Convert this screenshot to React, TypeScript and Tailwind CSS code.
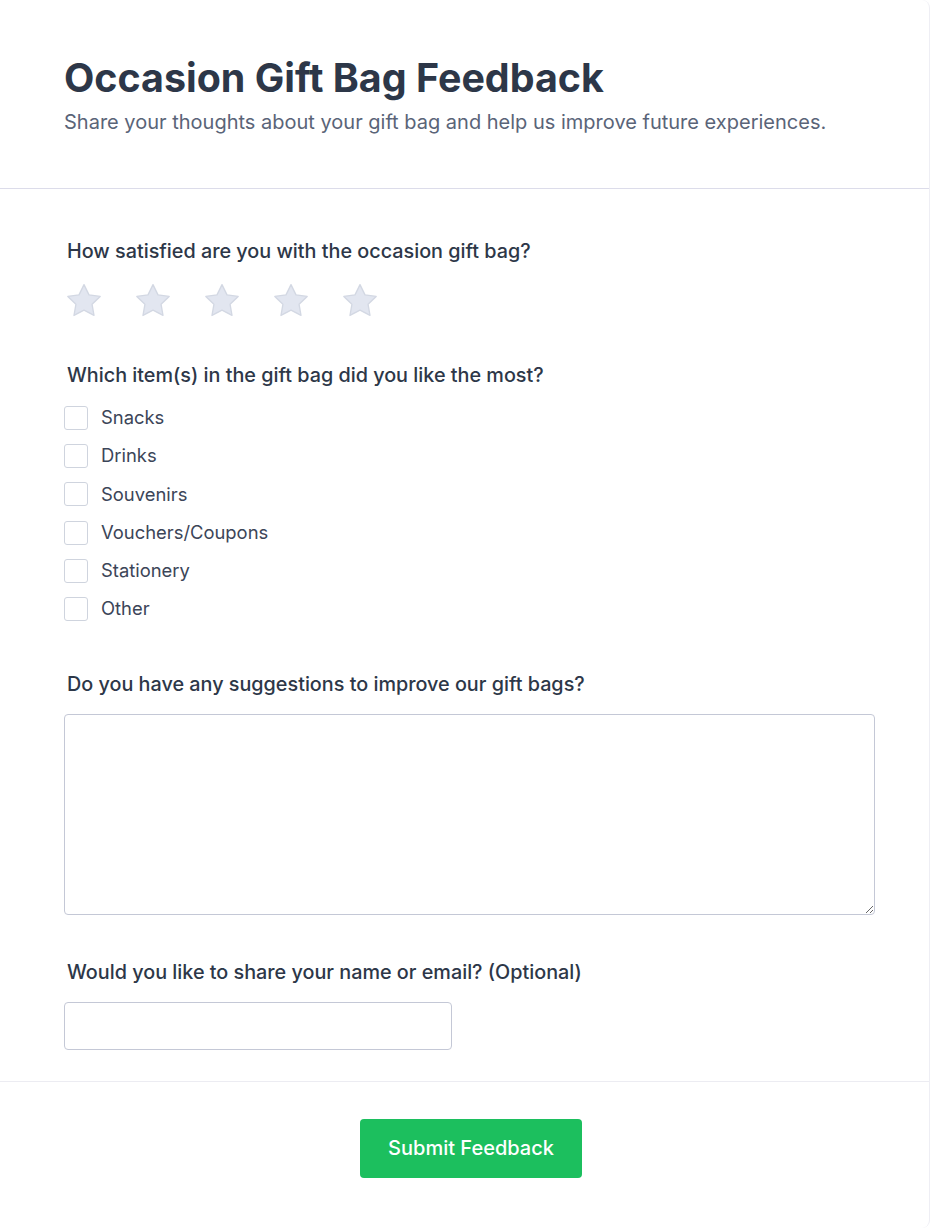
import React, { useState } from "react"

const items = ["Snacks", "Drinks", "Souvenirs", "Vouchers/Coupons", "Stationery", "Other"]

const Star = ({ filled, onClick }: { filled: boolean; onClick: () => void }) => (
  <button type="button" onClick={onClick} className="w-10 h-10 flex items-center justify-center">
    <svg width="40" height="40" viewBox="0 0 24 24">
      <path
        d="M12 2.2l3 6.1 6.7.97-4.85 4.72 1.15 6.67L12 17.5l-6 3.16 1.15-6.67L2.3 9.27l6.7-.97z"
        fill={filled ? "#f6c343" : "#e2e6f0"}
        stroke={filled ? "#e5a812" : "#d3d8e3"}
        strokeWidth="0.8"
        strokeLinejoin="round"
      />
    </svg>
  </button>
)

export default function App() {
  const [rating, setRating] = useState(0)
  const [checked, setChecked] = useState<string[]>([])

  const toggle = (item: string) => {
    setChecked((prev) => (prev.includes(item) ? prev.filter((i) => i !== item) : [...prev, item]))
  }

  return (
    <div className="min-h-screen bg-white font-['Inter',sans-serif]">
      <div className="bg-white rounded-lg border-r border-[#eeeef4]">
        {/* header */}
        <div className="pl-16 pr-[54px] pt-14 pb-[52px] border-b border-[#dcdcea]">
          <h1 className="text-[39.4px] leading-11 font-bold text-[#2d3748]">Occasion Gift Bag Feedback</h1>
          <p className="mt-2 text-xl leading-7 text-[#5a6478]">
            Share your thoughts about your gift bag and help us improve future experiences.
          </p>
        </div>

        {/* form */}
        <div className="pl-16 pr-[54px] pt-12 pb-[31px] border-b border-[#ececf2]">
          <label className="block ml-[3px] text-[19.8px] leading-7 font-medium text-[#2d3748]">
            How satisfied are you with the occasion gift bag?
          </label>
          <div className="mt-4 flex gap-[29px]">
            {[1, 2, 3, 4, 5].map((n) => (
              <Star key={n} filled={n <= rating} onClick={() => setRating(n)} />
            ))}
          </div>

          <label className="block mt-10 ml-[3px] text-[19.8px] leading-7 font-medium text-[#2d3748]">
            Which item(s) in the gift bag did you like the most?
          </label>
          <div className="mt-[15px] flex flex-col gap-[10.2px]">
            {items.map((item) => (
              <label key={item} className="flex items-center h-7 gap-[13px] cursor-pointer">
                <input
                  type="checkbox"
                  checked={checked.includes(item)}
                  onChange={() => toggle(item)}
                  className="w-6 h-6 appearance-none rounded-[3px] border border-[#cfd4de] bg-white checked:bg-[#1cbf5e] checked:border-[#1cbf5e]"
                />
                <span className="text-[18.4px] text-[#3c4558]">{item}</span>
              </label>
            ))}
          </div>

          <label className="block mt-[47px] ml-[3px] text-[19.8px] leading-7 font-medium text-[#2d3748]">
            Do you have any suggestions to improve our gift bags?
          </label>
          <textarea className="mt-4 block w-full h-[201px] rounded border border-[#c4c8d6] p-3 text-base outline-none" />

          <label className="block mt-[43px] ml-[3px] text-[19.8px] leading-7 font-medium text-[#2d3748]">
            Would you like to share your name or email? (Optional)
          </label>
          <input
            type="text"
            className="mt-4 block w-[388px] h-12 rounded border border-[#c4c8d6] px-3 text-base outline-none"
          />
        </div>

        {/* footer */}
        <div className="pl-16 pr-[51px] pt-[37px] pb-[50px] flex justify-center">
          <button
            type="button"
            className="h-[59px] px-7 rounded bg-[#1cbf5e] text-white text-xl font-medium hover:bg-[#18a852]"
          >
            Submit Feedback
          </button>
        </div>
      </div>
    </div>
  )
}
